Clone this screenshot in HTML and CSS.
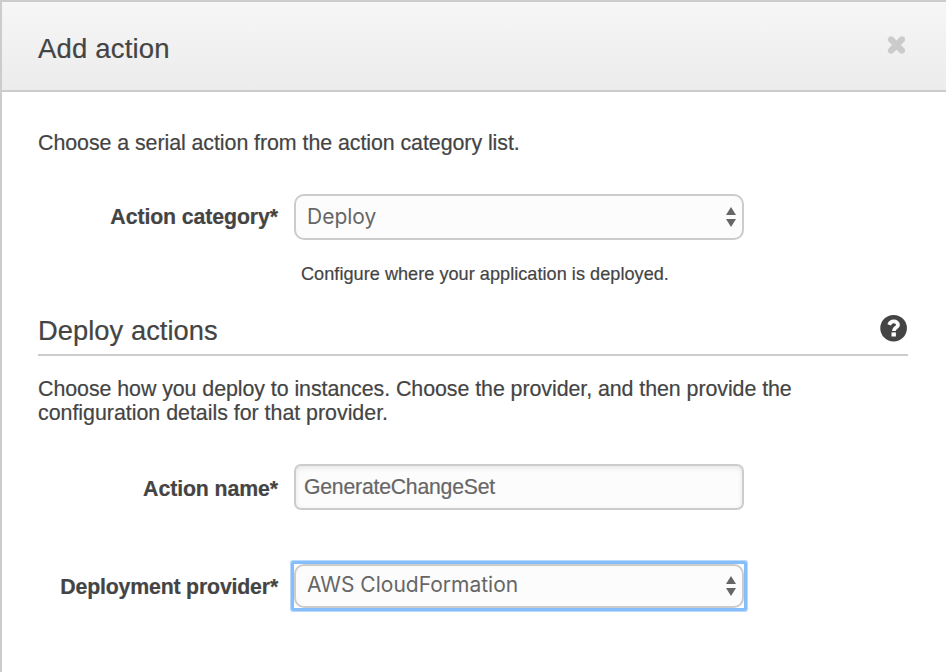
FILE: index.html
```html
<!DOCTYPE html>
<html lang="en">
<head>
<meta charset="utf-8">
<title>Add action</title>
<link rel="stylesheet" href="styles.css">
</head>
<body>
<div class="dialog">
  <header class="header">
    <h1 class="title">Add action</h1>
    <svg class="close" width="18" height="18" viewBox="0 0 18 18"><path d="M4.1 3.6L14.9 14.4M14.9 3.6L4.1 14.4" stroke="#cbcbcb" stroke-width="6.4" stroke-linecap="round"/></svg>
  </header>
  <main class="content">
    <p class="intro">Choose a serial action from the action category list.</p>
    <div class="row category">
      <label class="label">Action category*</label>
      <div class="control select"><span>Deploy</span><svg class="arrows" width="12" height="20" viewBox="0 0 12 20"><path d="M6 0L11 8H1ZM1 12H11L6 20Z" fill="#666"/></svg></div>
    </div>
    <p class="hint">Configure where your application is deployed.</p>
    <div class="section">
      <h2 class="subtitle">Deploy actions</h2>
      <svg class="help" width="28" height="28" viewBox="0 0 28 28"><circle cx="13.6" cy="14.2" r="13.3" fill="#444"/><path d="M9.2 10.8C10 8.6 11.5 7.4 13.7 7.4C16.2 7.4 18 8.8 18 10.9C18 13.4 13.8 13.8 13.8 16.9" fill="none" stroke="#fff" stroke-width="3.8"/><path d="M11.5 18.4H15.9V22.5H11.5Z" fill="#fff"/></svg>
    </div>
    <p class="description">Choose how you deploy to instances. Choose the provider, and then provide the<br><span class="second-line">configuration details for that provider.</span></p>
    <div class="row name">
      <label class="label">Action name*</label>
      <div class="control input"><span>GenerateChangeSet</span></div>
    </div>
    <div class="row provider">
      <label class="label">Deployment provider*</label>
      <div class="control select focused"><span>AWS CloudFormation</span><svg class="arrows" width="12" height="20" viewBox="0 0 12 20"><path d="M6 0L11 8H1ZM1 12H11L6 20Z" fill="#666"/></svg></div>
    </div>
  </main>
</div>
</body>
</html>
```
FILE: styles.css
```css
* { box-sizing: border-box; }
body {
  margin: 0;
  background: #fff;
  color: #444;
  font: 21.4px/24px "Liberation Sans", Arial, sans-serif;
  letter-spacing: -0.065px;
  -webkit-text-stroke: 0.2px currentColor;
}
h1, h2, p { margin: 0; font-weight: 400; white-space: nowrap; }
.dialog {
  height: 672px;
  border-top: 2px solid #ccc;
  border-left: 2px solid #ccc;
  overflow: hidden;
}
.header {
  display: flex;
  justify-content: space-between;
  height: 90px;
  padding: 31px 41px 0 36px;
  border-bottom: 2px solid #ccc;
  background: linear-gradient(#f6f6f6, #ececec);
}
.title { font-size: 27.5px; line-height: 32px; letter-spacing: 0.17px; }
.subtitle { font-size: 27.3px; line-height: 32px; letter-spacing: 0.05px; }
.close { margin-top: 3px; }
.content { padding: 39px 38px 0 36px; }
.intro { height: 63px; }
.row { display: flex; height: 46px; }
.label {
  width: 240px;
  padding-top: 11px;
  font-size: 21.3px;
  font-weight: 700;
  text-align: right;
  white-space: nowrap;
  letter-spacing: -0.1px;
}
.control {
  display: flex;
  align-items: center;
  justify-content: space-between;
  width: 450px;
  height: 46px;
  margin-left: 16px;
  border: 2px solid #ccc;
  background: #fcfcfc;
  color: #666;
  white-space: nowrap;
}
.select {
  padding: 0 5px 0 11px;
  border-radius: 10px;
  font-family: Inter, sans-serif;
  font-size: 21px;
  letter-spacing: 0;
  -webkit-text-stroke: 0;
}
.input {
  padding: 0 8px;
  border-radius: 7px;
  box-shadow: inset 0 2px 5px #e6e6e6;
  font-size: 21.2px;
  letter-spacing: -0.2px;
}
.hint {
  height: 50px;
  padding: 22px 0 0 263px;
  font-size: 18.1px;
  letter-spacing: 0.04px;
}
.section {
  display: flex;
  justify-content: space-between;
  height: 66px;
  padding-top: 25px;
  border-bottom: 2px solid #ccc;
}
.help { margin-top: -1px; }
.description { height: 108px; padding-top: 21px; }
.second-line { letter-spacing: -0.02px; }
.name .label { padding-top: 13px; }
.provider { margin-top: 53px; }
.provider .label { padding-top: 12px; letter-spacing: -0.18px; }
.focused {
  position: relative;
  height: 44px;
  margin-top: 1px;
  padding-bottom: 2px;
}
.focused .arrows { position: relative; top: 1px; }
.focused::before {
  content: "";
  position: absolute;
  inset: -5px;
  border: 3px solid #86bdfb;
  border-radius: 2px;
  box-shadow: 0 0 0 1px #b9d9fd;
}
```
